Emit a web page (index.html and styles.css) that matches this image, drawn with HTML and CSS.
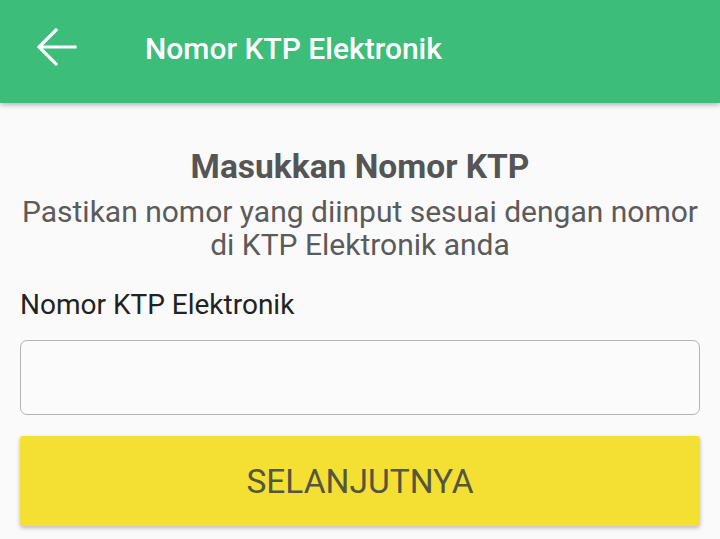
FILE: index.html
```html
<!DOCTYPE html>
<html lang="id">
<head>
<meta charset="utf-8">
<title>Nomor KTP Elektronik</title>
<link rel="stylesheet" href="styles.css">
</head>
<body>
<header class="appbar">
  <button class="back" aria-label="Kembali">
    <svg width="40" height="40" viewBox="0 0 40 40" fill="none" stroke="#fff" stroke-width="3.2" stroke-linecap="square">
      <path d="M38 19H3M19 2L2 19l17 17"/>
    </svg>
  </button>
  <h1 class="appbar-title">Nomor KTP Elektronik</h1>
</header>
<main class="content">
  <h2 class="heading">Masukkan Nomor KTP</h2>
  <p class="subtitle">Pastikan nomor yang diinput sesuai dengan nomor<br>di KTP Elektronik anda</p>
  <label class="label" for="ktp">Nomor KTP Elektronik</label>
  <input class="field" id="ktp" type="text">
  <button class="next">SELANJUTNYA</button>
</main>
</body>
</html>
```
FILE: styles.css
```css
* { box-sizing: border-box; }
html, body { margin: 0; padding: 0; }
body {
  background: #fafafa;
  font-family: Roboto, "Noto Sans", sans-serif;
  width: 720px;
  height: 539px;
  overflow: hidden;
}
.appbar {
  height: 103px;
  background: #3cbd7a;
  display: flex;
  align-items: center;
  padding-left: 37px;
  box-shadow: 0 2px 5px rgba(0,0,0,0.28);
  position: relative;
  z-index: 1;
}
.back {
  background: none;
  border: 0;
  padding: 0;
  width: 40px;
  height: 40px;
  display: flex;
  margin-top: -7px;
}
.appbar-title {
  margin: 0 0 0 68px;
  color: #fff;
  font-size: 30px;
  font-weight: 500;
  margin-top: -7px;
}
.content {
  padding: 44px 20px 0 20px;
  display: flex;
  flex-direction: column;
}
.heading {
  margin: 0;
  text-align: center;
  font-size: 33.5px;
  font-weight: 700;
  color: #555;
  line-height: 40px;
}
.subtitle {
  margin: 8px -10px 0 -10px;
  text-align: center;
  font-size: 30px;
  color: #5b5b5b;
  line-height: 33px;
}
.label {
  margin-top: 27px;
  font-size: 28px;
  color: #222;
  line-height: 34px;
}
.field {
  margin-top: 18px;
  height: 75px;
  border: 1.5px solid #b4b4b4;
  border-radius: 7px;
  background: #fbfbfb;
  width: 100%;
}
.next {
  margin-top: 21px;
  height: 90px;
  width: 100%;
  border: 0;
  border-radius: 3px;
  background: #f4e033;
  color: #56563e;
  font-family: Roboto, "Noto Sans", sans-serif;
  font-size: 33.5px;
  box-shadow: 0 2px 4px rgba(0,0,0,0.25);
}
```
